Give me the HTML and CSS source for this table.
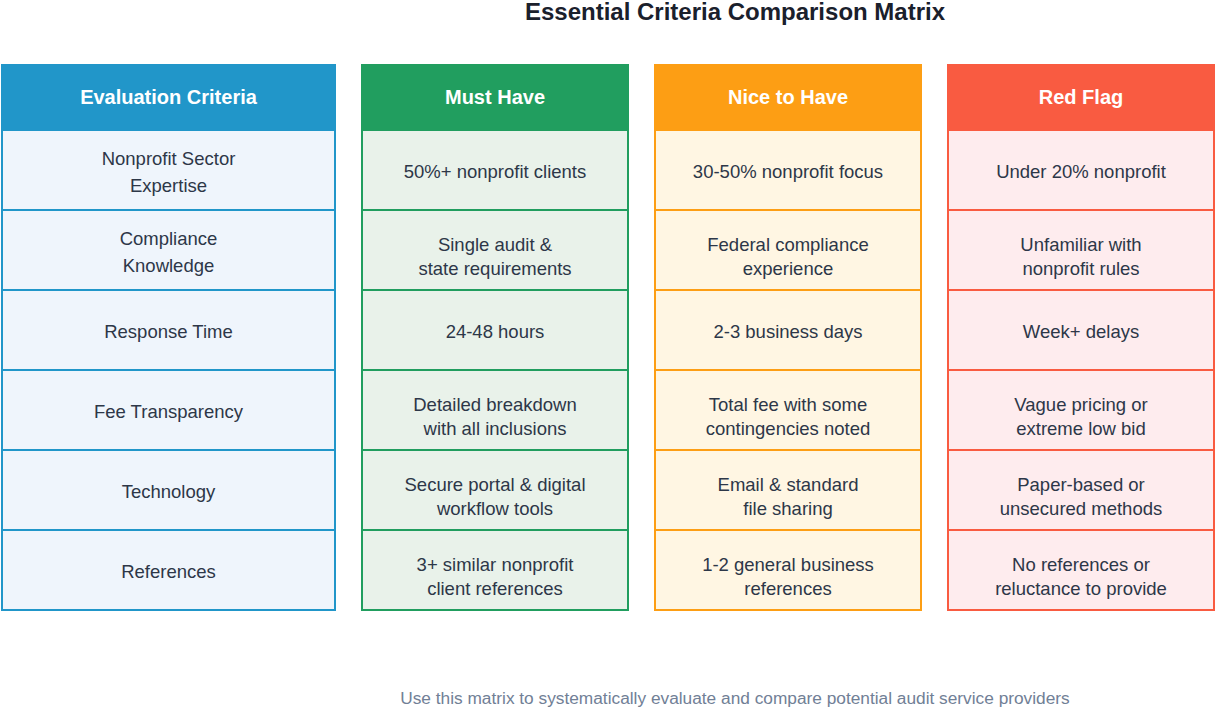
FILE: index.html
```html
<!DOCTYPE html>
<html lang="en">
<head>
<meta charset="utf-8">
<title>Essential Criteria Comparison Matrix</title>
<link rel="stylesheet" href="styles.css">
</head>
<body>
<h1 class="title">Essential Criteria Comparison Matrix</h1>
<div class="matrix">
  <div class="col col-criteria">
    <div class="head">Evaluation Criteria</div>
    <div class="cell two">Nonprofit Sector<br>Expertise</div>
    <div class="cell two">Compliance<br>Knowledge</div>
    <div class="cell">Response Time</div>
    <div class="cell">Fee Transparency</div>
    <div class="cell">Technology</div>
    <div class="cell">References</div>
  </div>
  <div class="col col-must">
    <div class="head">Must Have</div>
    <div class="cell">50%+ nonprofit clients</div>
    <div class="cell two">Single audit &amp;<br>state requirements</div>
    <div class="cell">24-48 hours</div>
    <div class="cell two">Detailed breakdown<br>with all inclusions</div>
    <div class="cell two">Secure portal &amp; digital<br>workflow tools</div>
    <div class="cell two">3+ similar nonprofit<br>client references</div>
  </div>
  <div class="col col-nice">
    <div class="head">Nice to Have</div>
    <div class="cell">30-50% nonprofit focus</div>
    <div class="cell two">Federal compliance<br>experience</div>
    <div class="cell">2-3 business days</div>
    <div class="cell two">Total fee with some<br>contingencies noted</div>
    <div class="cell two">Email &amp; standard<br>file sharing</div>
    <div class="cell two">1-2 general business<br>references</div>
  </div>
  <div class="col col-red">
    <div class="head">Red Flag</div>
    <div class="cell">Under 20% nonprofit</div>
    <div class="cell two">Unfamiliar with<br>nonprofit rules</div>
    <div class="cell">Week+ delays</div>
    <div class="cell two">Vague pricing or<br>extreme low bid</div>
    <div class="cell two">Paper-based or<br>unsecured methods</div>
    <div class="cell two">No references or<br>reluctance to provide</div>
  </div>
</div>
<p class="footnote">Use this matrix to systematically evaluate and compare potential audit service providers</p>
</body>
</html>
```

FILE: styles.css
```css
html, body {
  margin: 0;
  padding: 0;
  background: #ffffff;
}

body {
  width: 1217px;
  height: 708px;
  overflow: hidden;
  font-family: "Liberation Sans", Arial, sans-serif;
}

.title {
  margin: 0;
  padding-left: 253px;
  font-size: 24px;
  line-height: 24px;
  font-weight: bold;
  color: #1a202c;
  text-align: center;
}

.matrix {
  display: flex;
  gap: 25px;
  margin-top: 40px;
  padding-left: 1px;
}

.col {
  display: flex;
  flex-direction: column;
  width: 268px;
}

.col-criteria {
  width: 335px;
}

.head {
  box-sizing: border-box;
  height: 65px;
  padding-top: 2px;
  display: flex;
  align-items: center;
  justify-content: center;
  color: #ffffff;
  font-size: 20px;
  font-weight: bold;
}

.cell {
  box-sizing: border-box;
  height: 82px;
  margin-top: -2px;
  padding-top: 4px;
  border: 2px solid;
  display: flex;
  align-items: center;
  justify-content: center;
  text-align: center;
  font-size: 18.5px;
  line-height: 24px;
  color: #2d3748;
}

.head + .cell {
  margin-top: 0;
}

.cell.two {
  padding-top: 14px;
}

.col-criteria .cell.two {
  padding-top: 3px;
  line-height: 27px;
}

.col-criteria .head { background: #2196c9; }
.col-criteria .cell { border-color: #2196c9; background: #eff5fc; }

.col-must .head { background: #219e5f; }
.col-must .cell { border-color: #219e5f; background: #e9f2ea; }

.col-nice .head { background: #fd9e14; }
.col-nice .cell { border-color: #fd9e14; background: #fff6e3; }

.col-red .head { background: #f95b41; }
.col-red .cell { border-color: #f95b41; background: #feecee; }

.footnote {
  margin: 77px 0 0;
  padding-left: 253px;
  font-size: 17.3px;
  line-height: 20px;
  color: #718096;
  text-align: center;
}
```
